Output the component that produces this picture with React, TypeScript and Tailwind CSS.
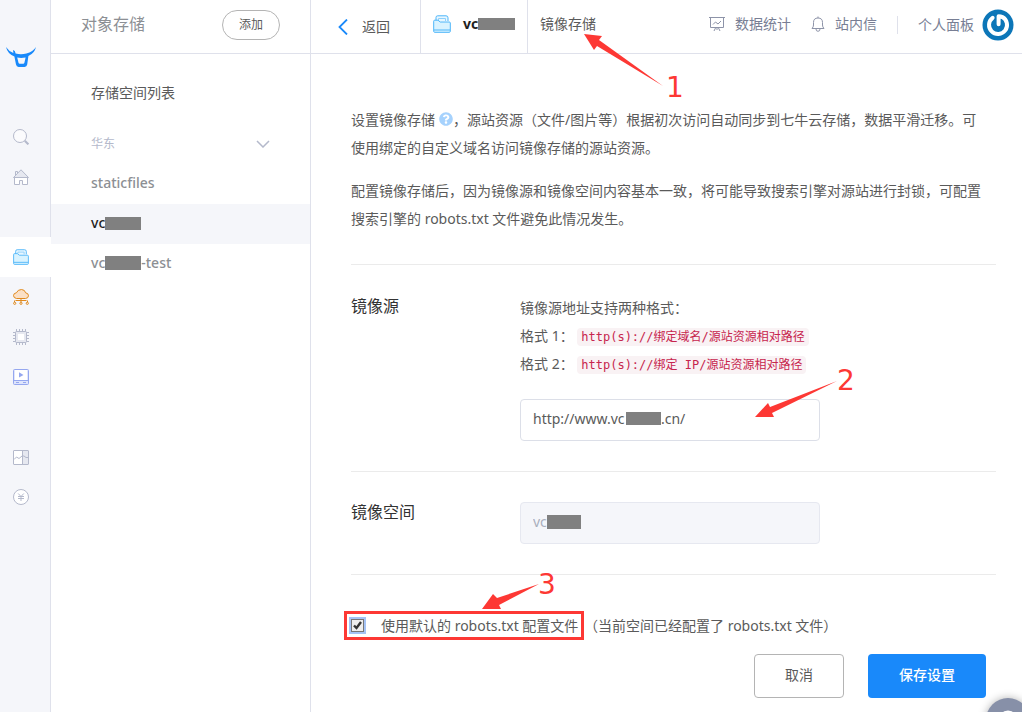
import { ReactNode } from 'react'
import { FaQuestionCircle } from 'react-icons/fa'

// Grey bar hiding part of a bucket name
function Mask({ className }: { className: string }) {
  return <span className={`inline-block shrink-0 bg-[#808080] ${className}`} />
}

function FolderIcon({ className }: { className?: string }) {
  return (
    <svg viewBox="0 0 18 18" className={className} fill="none" stroke="#4db5f9">
      <path d="M3 7V2.5Q3 .8 4.7 .8H13Q15 .8 15 2.8V6" fill="#e8f7ff" />
      <path d="M5.5 5V3.5H12.5V6" stroke="#8dd0fb" />
      <path d="M.7 6.2Q.7 5.2 1.7 5.2H5L7.2 7H16.3Q17.3 7 17.3 8V16.3Q17.3 17.3 16.3 17.3H1.7Q.7 17.3 .7 16.3Z" fill="#d9f3ff" />
      <path d="M1 15H17" />
    </svg>
  )
}

function LogoIcon() {
  return (
    <svg viewBox="0 0 30 20" className="h-5 w-[30px]" fill="#1989fa">
      <path d="M0 0Q2.8 4.3 7.4 6L7 3L8.8 4L9.6 6.6Q15 7.9 20.4 6.6Q27 4.8 30 0Q28.6 6.4 22.4 9L21.2 17.6Q20.8 20 18.6 20H12.6Q10.5 20 10 17.6L8.4 9.4Q1.6 7 0 0Z" />
      <path d="M11.2 10.6Q15.4 11.3 19.6 10.5L18.4 15.8Q18.2 16.8 17.2 16.8H13.8Q12.8 16.8 12.5 15.8Z" fill="#f5f6fa" />
    </svg>
  )
}

function SearchIcon() {
  return (
    <svg viewBox="0 0 16 16" className="size-4" fill="none" stroke="#b4b9cb">
      <circle cx="7" cy="7" r="6.5" fill="#fbfbfd" />
      <path d="M11.8 11.8L15.4 15.4" strokeWidth="2" />
    </svg>
  )
}

function HomeIcon() {
  return (
    <svg viewBox="0 0 16 16" className="size-4" fill="none" stroke="#b4b9cb">
      <path d="M1.5 8V15.5H6.5V11.5H9.5V15.5H14.5V8" fill="#fff" />
      <path d="M.5 8.5L8 .8L15.5 8.5Z" fill="#e6e8f0" />
      <path d="M2.5 6V2.5H4.5V4" />
    </svg>
  )
}

function CloudIcon() {
  return (
    <svg viewBox="0 0 16 16" className="size-4" fill="none" stroke="#e08a1e">
      <path d="M3.5 9.5Q.5 9 .5 6.5Q.7 4 3.4 3.8Q4.8 .5 8.5 .5Q12 .7 12.6 3.8Q15.5 4.2 15.5 6.8Q15.3 9.3 12.5 9.5Z" fill="#fbe0c6" />
      <path d="M2.5 11.5H13.5M1.5 13V11.5M8 9.5V13M14.5 13V11.5" />
      <circle cx="1.7" cy="14.3" r="1.1" />
      <circle cx="8" cy="14.3" r="1.1" />
      <circle cx="14.3" cy="14.3" r="1.1" />
    </svg>
  )
}

function ChipIcon() {
  return (
    <svg viewBox="0 0 16 16" className="size-4" fill="none" stroke="#b4b9cb">
      <path d="M3.5 0V16M6.5 0V16M9.5 0V16M12.5 0V16M0 3.5H16M0 6.5H16M0 9.5H16M0 12.5H16" />
      <rect x="2.5" y="2.5" width="11" height="11" rx="1" fill="#e6e8f0" />
      <rect x="5" y="5" width="6" height="6" fill="#fff" stroke="none" />
    </svg>
  )
}

function PlayerIcon() {
  return (
    <svg viewBox="0 0 16 16" className="size-4" fill="none" stroke="#95a7ef">
      <rect x=".5" y=".5" width="15" height="15" rx="1" fill="#dfe5fc" />
      <rect x="2" y="1" width="12" height="10" fill="#fff" stroke="none" />
      <path d="M6 3.2L10.5 5.9L6 8.6Z" fill="#95a7ef" stroke="none" />
      <path d="M1 11.5H15M3 13.5H6M10 13.5H13" />
    </svg>
  )
}

function ChartIcon() {
  return (
    <svg viewBox="0 0 16 16" className="size-4" fill="none" stroke="#b4b9cb">
      <rect x=".5" y="1.5" width="15" height="14" rx=".5" fill="#fff" />
      <path d="M10 2H15V15H10Z" fill="#e6e8f0" stroke="none" />
      <path d="M9.5 2V15M1 10.5L3.5 8L6 9.5L9 7H11L13 8.5H15" />
    </svg>
  )
}

function YenIcon() {
  return (
    <svg viewBox="0 0 16 16" className="size-4" fill="none" stroke="#b4b9cb">
      <circle cx="8" cy="8" r="7.5" fill="#fff" />
      <path d="M5.2 4.5L8 7.5L10.8 4.5M8 7.5V12M5 7.5H11M5 9.5H11" />
    </svg>
  )
}

function BoardIcon() {
  return (
    <svg viewBox="0 0 16 16" className="size-4" fill="none" stroke="#8d93a8">
      <path d="M0 1.5H16M1.5 1.5V11.5H14.5V1.5M4 8.5L6.5 6L9 8L12 5M5 15L6.5 12M11 15L9.5 12M8 12V14" />
    </svg>
  )
}

function BellIcon() {
  return (
    <svg viewBox="0 0 14 16" className="h-4 w-3.5" fill="none" stroke="#8d93a8">
      <path d="M1 12.5Q2.5 11 2.5 9V6.5Q2.5 2 7 2Q11.5 2 11.5 6.5V9Q11.5 11 13 12.5ZM7 2V.5M5 13Q5 15.3 7 15.3Q9 15.3 9 13" />
    </svg>
  )
}

function Avatar() {
  return (
    <svg viewBox="0 0 32 32" className="size-8">
      <circle cx="16" cy="16" r="15.5" fill="#0c76b8" />
      <path
        d="M10.6 8.8A9 9 0 1 0 20.4 8.1Q18.6 7.2 16.6 7.2V15.2"
        fill="none"
        stroke="#fff"
        strokeWidth="4"
        strokeLinecap="round"
        strokeLinejoin="round"
      />
    </svg>
  )
}

function Arrow({ points, className }: { points: string; className: string }) {
  return (
    <svg className={`pointer-events-none absolute overflow-visible ${className}`} fill="#fd3834">
      <polygon points={points} />
    </svg>
  )
}

function StepNumber({ className, children }: { className: string; children: ReactNode }) {
  return (
    <span className={`pointer-events-none absolute font-['DejaVu_Sans',sans-serif] text-[28px] leading-7 text-[#fd3834] ${className}`}>
      {children}
    </span>
  )
}

const railGroups = [
  [
    { label: '搜索', icon: <SearchIcon /> },
    { label: '首页', icon: <HomeIcon /> },
  ],
  [
    { label: '对象存储', icon: <FolderIcon className="size-4" />, active: true },
    { label: '融合 CDN', icon: <CloudIcon /> },
    { label: '云主机', icon: <ChipIcon /> },
    { label: '直播云', icon: <PlayerIcon /> },
  ],
  [
    { label: '统计', icon: <ChartIcon /> },
    { label: '财务', icon: <YenIcon /> },
  ],
]

function Rail() {
  return (
    <aside className="flex w-[51px] shrink-0 flex-col gap-10 border-r border-[#dfe1eb] bg-[#f5f6fa] pt-[37px]">
      <a href="#" aria-label="七牛云" className="flex h-10 items-center pl-1.5">
        <LogoIcon />
      </a>
      {railGroups.map((group, i) => (
        <nav key={i}>
          {group.map(item => (
            <a
              key={item.label}
              href="#"
              aria-label={item.label}
              className={`relative -mr-px flex h-10 items-center pl-[13px] ${item.active ? 'bg-white' : ''}`}
            >
              {item.icon}
            </a>
          ))}
        </nav>
      ))}
    </aside>
  )
}

function BucketPanel() {
  return (
    <section className="w-[260px] shrink-0 border-r border-[#dfe1eb]">
      <div className="flex h-[54px] items-center justify-between border-b border-[#dfe1eb] px-[30px] pb-1">
        <h1 className="pb-0.5 text-base text-[#8c8f94]">对象存储</h1>
        <button className="h-[30px] w-[58px] rounded-full border border-[#b4b4b4] text-xs text-[#5a5a5a]">添加</button>
      </div>
      <h2 className="mt-5 flex h-10 items-center px-10 pb-0.5 text-sm text-[#5a5a5a]">存储空间列表</h2>
      <button className="mt-2.5 flex h-10 w-full items-center justify-between px-10 text-xs text-[#b4b9cb]">
        华东
        <svg viewBox="0 0 14 8" className="h-2 w-3.5" fill="none" stroke="#b4b9cb" strokeWidth="1.5">
          <path d="M1 1L7 7L13 1" />
        </svg>
      </button>
      <nav className="text-sm font-medium text-[#8c8f94]">
        <a href="#" className="flex h-10 items-center px-10 pb-0.5">staticfiles</a>
        <a href="#" className="flex h-10 items-center bg-[#f5f6fa] px-10 pb-0.5 text-[#222]">
          vc
          <Mask className="h-[13px] w-9" />
        </a>
        <a href="#" className="flex h-10 items-center px-10 pb-0.5">
          vc
          <Mask className="h-3.5 w-9" />
          -test
        </a>
      </nav>
    </section>
  )
}

function TopBar() {
  return (
    <header className="relative flex h-[54px] shrink-0 border-b border-[#dfe1eb] text-sm whitespace-nowrap">
      <a href="#" className="flex w-[110px] items-center gap-3.5 border-r border-[#dfe1eb] pl-[27px] text-[#5a5a5a]">
        <svg viewBox="0 0 10 16" className="h-4 w-2.5" fill="none" stroke="#1989fa" strokeWidth="1.8">
          <path d="M9 .5L1.5 8L9 15.5" />
        </svg>
        返回
      </a>
      <a href="#" className="flex w-[107px] items-center border-r border-[#dfe1eb] pb-1.5 pl-3 font-bold text-[#222]">
        <FolderIcon className="mr-3 size-[18px]" />
        vc
        <Mask className="h-3 w-[37px]" />
      </a>
      <span className="flex items-center pb-1.5 pl-3 text-[#5a5a5a]">镜像存储</span>
      <nav className="ml-auto flex items-center pr-2 pb-1 text-[#787e94]">
        <a href="#" className="flex items-center gap-2.5 pb-0.5"><BoardIcon />数据统计</a>
        <a href="#" className="ml-5 flex items-center gap-2.5 pb-0.5"><BellIcon />站内信</a>
        <span className="mx-5 h-[18px] w-px bg-[#dfe1eb]" />
        <a href="#" className="flex items-center gap-2">个人面板<Avatar /></a>
      </nav>
      <Arrow className="top-[34px] left-[273px] h-[52px] w-20" points="0,0 18,2 15,6 79,52 13,12 10,16" />
      <StepNumber className="top-[74px] left-[355px]">1</StepNumber>
    </header>
  )
}

function Code({ children }: { children: ReactNode }) {
  return (
    <code className="rounded bg-[#f9f2f4] px-1 py-0.5 font-['DejaVu_Sans_Mono','Noto_Sans_CJK_SC',monospace] text-xs text-[#c7254e]">
      {children}
    </code>
  )
}

function MirrorForm() {
  return (
    <form className="pt-[52px] pr-[26px] pl-10 text-sm text-[#5a5a5a]">
      <div className="space-y-[15px] pr-3 pb-[31px] leading-7">
        <p>
          设置镜像存储
          <FaQuestionCircle className="ml-1 inline size-3.5 align-[-1px] text-[#a6d2fd]" />
          ，源站资源（文件/图片等）根据初次访问自动同步到七牛云存储，数据平滑迁移。可使用绑定的自定义域名访问镜像存储的源站资源。
        </p>
        <p>
          配置镜像存储后，因为镜像源和镜像空间内容基本一致，将可能导致搜索引擎对源站进行封锁，可配置搜索引擎的 robots.txt 文件避免此情况发生。
        </p>
      </div>

      <div className="flex border-t border-[#ebebeb] pt-[29px] pb-[30px]">
        <label htmlFor="source" className="w-[169px] shrink-0 text-base text-[#333]">镜像源</label>
        <div className="leading-7">
          <p>镜像源地址支持两种格式：</p>
          <p>格式 1： <Code>http(s)://绑定域名/源站资源相对路径</Code></p>
          <p>格式 2： <Code>http(s)://绑定 IP/源站资源相对路径</Code></p>
          <div className="relative mt-[21px] w-[300px]">
            <input
              id="source"
              type="text"
              defaultValue="http://www.vc          .cn/"
              className="block h-[42px] w-full rounded border border-[#dcdfe8] px-3 pb-1"
            />
            <Mask className="absolute top-[13px] left-[106px] h-[13px] w-[35px]" />
            <Arrow className="top-[-18px] left-[235px] h-9 w-[82px]" points="0,36 13,22 15,26 82,0 17,32 19,36" />
            <StepNumber className="top-[-32px] left-[317px]">2</StepNumber>
          </div>
        </div>
      </div>

      <div className="flex border-t border-[#ebebeb] pb-[30px]">
        <label htmlFor="space" className="w-[169px] shrink-0 pt-7 text-base text-[#333]">镜像空间</label>
        <div className="relative mt-[30px] w-[300px]">
          <input
            id="space"
            type="text"
            disabled
            defaultValue="vc"
            className="block h-[42px] w-full rounded border border-[#e6e8f0] bg-[#f5f6fa] px-3 pb-1 text-[#a9aebd]"
          />
          <Mask className="absolute top-[13px] left-[27px] h-3.5 w-[34px]" />
        </div>
      </div>

      <div className="relative flex items-center border-t border-[#ebebeb] pt-9 whitespace-nowrap">
        <label className="-ml-[7px] flex h-[29px] w-60 items-center border-3 border-[#fd3834] pl-1">
          <input
            type="checkbox"
            defaultChecked
            className="mr-[17px] size-[13px] appearance-none border border-[#777] bg-[#eee] bg-[url('data:image/svg+xml,%3Csvg%20xmlns=%22http://www.w3.org/2000/svg%22%20viewBox=%220%200%2011%2011%22%3E%3Cpath%20d=%22M2%205.5L4.5%208L9%202%22%20fill=%22none%22%20stroke=%22%23333%22%20stroke-width=%222.4%22/%3E%3C/svg%3E')] ring-2 ring-[#a5c3f5]"
          />
          使用默认的 robots.txt 配置文件
        </label>
        <span>（当前空间已经配置了 robots.txt 文件）</span>
        <Arrow className="top-[9px] left-[131px] h-[25px] w-[57px]" points="0,25 11,10 15,14 57,0 17,21 19,25" />
        <StepNumber className="top-[-4px] left-[187px]">3</StepNumber>
      </div>

      <div className="flex justify-end gap-6 pt-3.5 pr-2.5 pb-3.5">
        <button type="button" className="h-11 w-[90px] rounded border border-[#b4b4b4] bg-white pb-0.5">取消</button>
        <button type="submit" className="h-11 w-[118px] rounded bg-[#1989fa] pb-0.5 font-medium text-white">保存设置</button>
      </div>
    </form>
  )
}

export default function App() {
  return (
    <div className="flex min-h-screen overflow-hidden bg-white font-['Noto_Sans','Noto_Sans_CJK_SC',sans-serif]">
      <Rail />
      <BucketPanel />
      <main className="min-w-0 flex-1">
        <TopBar />
        <MirrorForm />
      </main>
      <button
        aria-label="帮助"
        className="fixed -right-2 -bottom-[30px] flex size-11 justify-center rounded-full bg-[#8790a8] pt-3 shadow-[0_0_8px_rgba(0,0,0,0.3)]"
      >
        <svg viewBox="0 0 20 20" className="size-5" fill="none" stroke="#fff" strokeWidth="3">
          <circle cx="10" cy="10" r="8" />
        </svg>
      </button>
    </div>
  )
}
